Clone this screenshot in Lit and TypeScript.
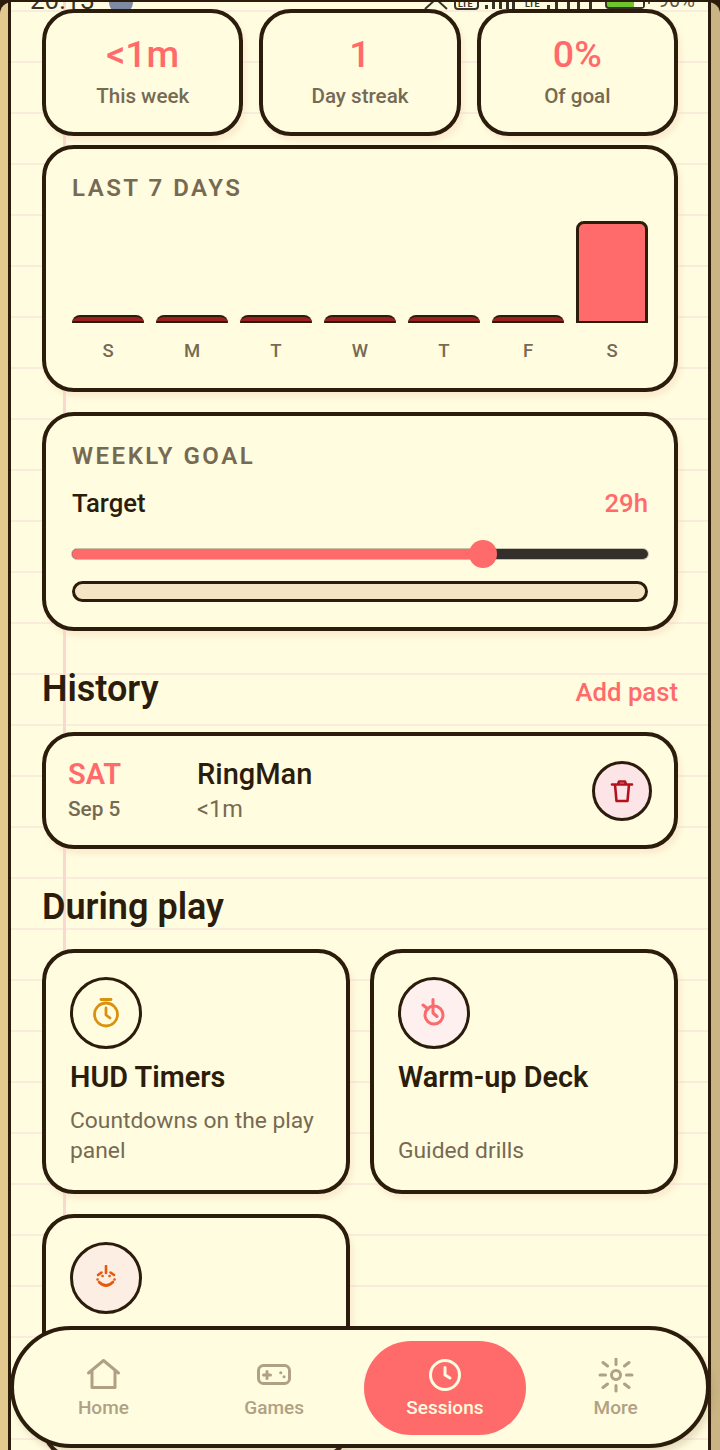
import { LitElement, css, html, svg } from "lit";
import { customElement } from "lit/decorators.js";

const days = [
  { label: "S", height: 0 },
  { label: "M", height: 0 },
  { label: "T", height: 0 },
  { label: "W", height: 0 },
  { label: "T", height: 0 },
  { label: "F", height: 0 },
  { label: "S", height: 100 },
];

const icons = {
  home: svg`<path d="M3.5 15 18.5 2.5 33.5 15M7 12.5V29.500h23V12.500" />`,
  games: svg`<rect x="2.500" y="7.500" width="31" height="18" rx="5" /><path d="M7.500 17h7M11 13.500v7" /><path d="M24.700 14.700h.1M28 18.700h.1" />`,
  clock: svg`<circle cx="18" cy="17" r="14.500" /><path d="M18 9.500V17l5 3" />`,
  more: svg`<circle cx="18" cy="17" r="4.500" /><path d="M18 1v5.500M18 27.500V33M2 17h5.500M28.500 17H34M5 4.500l4.500 3.500M26.500 26l4.500 3.500M5 29.500 9.500 26M26.500 8 31 4.500" />`,
};

@customElement("app-root")
export class AppRoot extends LitElement {
  static styles = css`
    :host {
      display: block;
      font-family: Roboto, "Noto Sans", sans-serif;
      color: #2b1c0c;
    }

    .device {
      position: relative;
      height: 1450px;
      overflow: hidden;
      box-sizing: border-box;
      padding-top: 2px;
      background: #2b1c0c;
    }

    .binder {
      height: 1448px;
      box-sizing: border-box;
      padding: 0 9px 0 8px;
      border-radius: 12px 12px 0 0;
      background: linear-gradient(90deg, #e2c98f 0, #e2c98f 50%, #cbb484 50%, #cbb484 100%);
    }

    .paper {
      position: relative;
      height: 1448px;
      box-sizing: border-box;
      overflow: hidden;
      padding: 9px 30px 0 31px;
      border-left: 3px solid #2b1c0c;
      border-right: 3px solid #2b1c0c;
      background-color: #fffcdf;
      background-image:
        linear-gradient(90deg, transparent 52px, #fbd8cf 52px, #fbd8cf 55px, transparent 55px),
        repeating-linear-gradient(180deg, transparent 0, transparent 8px, #f9ecda 8px, #f9ecda 10px, transparent 10px, transparent 51px);
    }

    .status {
      position: absolute;
      top: -15px;
      left: 19px;
      right: 13px;
      height: 26px;
      display: flex;
      align-items: flex-end;
      font-size: 26px;
      line-height: 26px;
      color: #3a3428;
    }

    .status .wrench {
      width: 24px;
      height: 24px;
      margin: 0 0 -1px 14px;
      border-radius: 50%;
      background: #7c8aa4;
    }

    .status .signal {
      margin: 0 0 3px auto;
      display: block;
    }

    .status .signal text {
      font-size: 9px;
      font-weight: 700;
      fill: #3a3428;
    }

    .status .pct {
      font-size: 20px;
      margin-left: 6px;
      color: #5c574c;
    }

    .content {
      position: relative;
      margin-top: -2px;
      display: flex;
      flex-direction: column;
    }

    .card {
      box-sizing: border-box;
      background: #fffcdf;
      border: 4px solid #2b1c0c;
      border-radius: 32px;
      box-shadow: 3px 5px 5px rgba(243, 205, 178, 0.35);
    }

    .stats {
      display: grid;
      grid-template-columns: repeat(3, 1fr);
      gap: 16px;
    }

    .stat {
      height: 127px;
      display: flex;
      flex-direction: column;
      align-items: center;
      padding-top: 19px;
    }

    .stat .value {
      font-size: 37.5px;
      line-height: 44px;
      font-weight: 500;
      color: #ff6b6b;
    }

    .stat .label {
      margin-top: 7px;
      font-size: 20.6px;
      line-height: 26px;
      font-weight: 500;
      color: #776a53;
    }

    .section-label {
      font-size: 24px;
      line-height: 28px;
      font-weight: 600;
      letter-spacing: 2.5px;
      color: #776a53;
    }

    .chart {
      margin-top: 9px;
      height: 247px;
      padding: 25px 26px 0 26px;
    }

    .bars {
      margin-top: 19px;
      display: grid;
      grid-template-columns: repeat(7, 1fr);
      gap: 12px;
      height: 102px;
      align-items: end;
    }

    .bar {
      box-sizing: border-box;
      background: #ff6b6b;
      border: 3px solid #2b1c0c;
      border-bottom-width: 2px;
      border-radius: 8px 8px 0 0;
    }

    .bar.empty {
      min-height: 8px;
      background: #9c2020;
      border-width: 2px 0 2px 0;
    }

    .day-labels {
      margin-top: 16px;
      display: grid;
      grid-template-columns: repeat(7, 1fr);
      gap: 12px;
      text-align: center;
      font-size: 18.5px;
      line-height: 24px;
      font-weight: 500;
      color: #776a53;
    }

    .goal {
      margin-top: 20px;
      height: 219px;
      padding: 26px 26px 0 26px;
    }

    .goal-row {
      margin-top: 17px;
      display: flex;
      justify-content: space-between;
      align-items: center;
      font-size: 25.7px;
      line-height: 32px;
      font-weight: 500;
    }

    .goal-row .hours {
      color: #ff6b6b;
    }

    .slider {
      position: relative;
      margin-top: 30px;
      height: 10px;
      border-radius: 5px;
      background: #33302c;
      outline: 1px solid rgba(70, 60, 50, 0.3);
    }

    .slider .fill {
      height: 10px;
      border-radius: 5px;
      background: #ff6b6b;
    }

    .slider .thumb {
      position: absolute;
      top: -9px;
      width: 28px;
      height: 28px;
      margin-left: -14px;
      border-radius: 50%;
      background: #ff6b6b;
    }

    .progress {
      margin-top: 22px;
      box-sizing: border-box;
      height: 21px;
      border: 3px solid #2b1c0c;
      border-radius: 11px;
      background: #f6e5c4;
    }

    .heading {
      height: 40px;
      display: flex;
      justify-content: space-between;
      align-items: center;
      font-size: 36px;
      line-height: 40px;
      font-weight: 600;
    }

    .heading .action {
      font-size: 25.7px;
      line-height: 30px;
      font-weight: 500;
      color: #ff6b6b;
      margin-top: 6px;
    }

    .heading.history {
      margin-top: 38px;
    }

    .heading.play {
      margin-top: 38px;
    }

    .row {
      margin-top: 23px;
      height: 117px;
      display: flex;
      align-items: center;
      padding: 0 22px;
    }

    .row .when {
      width: 129px;
      padding-bottom: 2px;
    }

    .row .dow {
      font-size: 29px;
      line-height: 32px;
      font-weight: 600;
      color: #ff6b6b;
    }

    .row .date {
      margin-top: 6px;
      font-size: 20.8px;
      line-height: 26px;
      font-weight: 500;
      color: #776a53;
    }

    .row .game {
      flex: 1;
    }

    .row .name {
      font-size: 29px;
      line-height: 32px;
      font-weight: 500;
    }

    .row .length {
      margin-top: 5px;
      font-size: 23.5px;
      line-height: 28px;
      color: #776a53;
    }

    .circle {
      box-sizing: border-box;
      display: flex;
      align-items: center;
      justify-content: center;
      border: 3.5px solid #2b1c0c;
      border-radius: 50%;
    }

    .delete {
      width: 60px;
      height: 60px;
      background: #fde4e6;
    }

    .tiles {
      margin-top: 22px;
      display: grid;
      grid-template-columns: repeat(2, 1fr);
      gap: 20px;
    }

    .tile {
      height: 245px;
      display: flex;
      flex-direction: column;
      padding: 24px 24px 24px 24px;
    }

    .tile .circle {
      width: 72px;
      height: 72px;
    }

    .tile .title {
      margin-top: 11px;
      font-size: 28.8px;
      line-height: 34px;
      font-weight: 600;
    }

    .tile .desc {
      margin-top: auto;
      font-size: 22.8px;
      line-height: 30px;
      color: #776a53;
    }

    .nav {
      position: absolute;
      left: 10px;
      right: 10px;
      top: 1326px;
      height: 122px;
      box-sizing: border-box;
      display: grid;
      grid-template-columns: repeat(4, 1fr);
      gap: 8px;
      padding: 11px 9px 9px 8px;
      background: #fffcdf;
      border: 4px solid #2b1c0c;
      border-radius: 61px;
      box-shadow: 3px 5px 6px rgba(120, 90, 50, 0.18);
    }

    .nav-item {
      box-sizing: border-box;
      padding-top: 2px;
      display: flex;
      flex-direction: column;
      align-items: center;
      justify-content: center;
      font-size: 19px;
      line-height: 24px;
      font-weight: 500;
      color: #b0a184;
      border-radius: 47px;
    }

    .nav-item span {
      margin-top: 2px;
    }

    .nav-item svg {
      fill: none;
      stroke: currentColor;
      stroke-width: 3;
      stroke-linecap: round;
      stroke-linejoin: round;
    }

    .nav-item.active {
      background: #ff6b6b;
      color: #fffcdf;
    }
  `;

  render() {
    return html`
      <div class="device">
        <div class="binder">
          <div class="paper">
            <div class="status">
              <span>20:13</span>
              <span class="wrench"></span>
              <svg class="signal" width="230" height="16" viewBox="0 0 230 16">
                <path d="M3 15 14 5l11 10" fill="none" stroke="#3a3428" stroke-width="2" />
                <rect x="33" y="4" width="23" height="11" rx="3" fill="none" stroke="#3a3428" stroke-width="2" />
                <text x="36" y="13">LTE</text>
                <g fill="#3a3428">
                  <rect x="63" y="11" width="3" height="4" />
                  <rect x="70" y="8" width="3" height="7" />
                  <rect x="77" y="4" width="3" height="11" />
                  <rect x="84" y="2" width="3" height="13" />
                  <rect x="90" y="0" width="3" height="15" />
                  <rect x="125" y="11" width="3" height="4" />
                  <rect x="133" y="8" width="3" height="7" />
                  <rect x="145" y="4" width="3" height="11" />
                  <rect x="155" y="2" width="3" height="13" />
                  <rect x="167" y="0" width="3" height="15" />
                </g>
                <text x="103" y="13">LTE</text>
                <rect x="184" y="2" width="38" height="12" rx="3" fill="#6fc52c" stroke="#3a3428" stroke-width="2" />
                <rect x="212" y="3" width="9" height="10" fill="#fffcdf" />
                <circle cx="227" cy="9" r="1" fill="#3a3428" />
              </svg>
              <span class="pct">90%</span>
            </div>
            <div class="content">
              <div class="stats">
                ${[
                  ["<1m", "This week"],
                  ["1", "Day streak"],
                  ["0%", "Of goal"],
                ].map(
                  ([value, label]) => html`
                    <div class="card stat">
                      <span class="value">${value}</span>
                      <span class="label">${label}</span>
                    </div>
                  `,
                )}
              </div>

              <div class="card chart">
                <div class="section-label">LAST 7 DAYS</div>
                <div class="bars">
                  ${days.map(
                    (d) => html`<div
                      class="bar ${d.height ? "" : "empty"}"
                      style="height: ${d.height}%"
                    ></div>`,
                  )}
                </div>
                <div class="day-labels">
                  ${days.map((d) => html`<span>${d.label}</span>`)}
                </div>
              </div>

              <div class="card goal">
                <div class="section-label">WEEKLY GOAL</div>
                <div class="goal-row">
                  <span>Target</span>
                  <span class="hours">29h</span>
                </div>
                <div class="slider">
                  <div class="fill" style="width: 71.4%"></div>
                  <div class="thumb" style="left: 71.4%"></div>
                </div>
                <div class="progress"></div>
              </div>

              <div class="heading history">
                <span>History</span>
                <span class="action">Add past</span>
              </div>

              <div class="card row">
                <div class="when">
                  <div class="dow">SAT</div>
                  <div class="date">Sep 5</div>
                </div>
                <div class="game">
                  <div class="name">RingMan</div>
                  <div class="length">&lt;1m</div>
                </div>
                <div class="circle delete">
                  <svg width="24" height="24" viewBox="0 0 24 24" fill="none" stroke="#b3121d" stroke-width="2.6" stroke-linejoin="round" stroke-linecap="round">
                    <path d="M2 5.500h20M8 5.500l1-3h6l1 3M5 5.500 6.500 22h11L19 5.500" />
                  </svg>
                </div>
              </div>

              <div class="heading play"><span>During play</span></div>

              <div class="tiles">
                <div class="card tile">
                  <div class="circle" style="background: #fffcdf">
                    <svg width="30" height="32" viewBox="0 0 30 32" fill="none" stroke="#d9920f" stroke-width="2.8" stroke-linecap="round" stroke-linejoin="round">
                      <path d="M10 2.500h10" />
                      <circle cx="15" cy="17.500" r="11.500" />
                      <path d="M15 11v7l4 3" />
                    </svg>
                  </div>
                  <div class="title">HUD Timers</div>
                  <div class="desc">Countdowns on the play panel</div>
                </div>
                <div class="card tile">
                  <div class="circle" style="background: #fdf0ee">
                    <svg width="30" height="32" viewBox="0 0 30 32" fill="none" stroke="#fa6b6e" stroke-width="3" stroke-linecap="round" stroke-linejoin="round">
                      <circle cx="15" cy="18" r="9" />
                      <path d="M14 2.500V16l4 3.500M4 8l5 4" />
                    </svg>
                  </div>
                  <div class="title">Warm-up Deck</div>
                  <div class="desc">Guided drills</div>
                </div>
                <div class="card tile">
                  <div class="circle" style="background: #fdeee4">
                    <svg width="26" height="26" viewBox="0 0 26 26" fill="none" stroke="#e8590c" stroke-width="2.6" stroke-linecap="round">
                      <path d="M13 1v7" />
                      <path d="M5 10l3.500-2.500M21 10l-3.500-2.500" />
                      <path d="M4.500 14.500h.1M21.500 14.500h.1M9.500 11h.1M16.500 11h.1" />
                      <path d="M6 17q7 7 14 0" />
                    </svg>
                  </div>
                </div>
              </div>
            </div>
          </div>
        </div>

        <nav class="nav">
          ${[
            ["Home", icons.home, false],
            ["Games", icons.games, false],
            ["Sessions", icons.clock, true],
            ["More", icons.more, false],
          ].map(
            ([label, icon, active]) => html`
              <div class="nav-item ${active ? "active" : ""}">
                <svg width="36" height="36" viewBox="0 0 36 36">${icon}</svg>
                <span>${label}</span>
              </div>
            `,
          )}
        </nav>
      </div>
    `;
  }
}
